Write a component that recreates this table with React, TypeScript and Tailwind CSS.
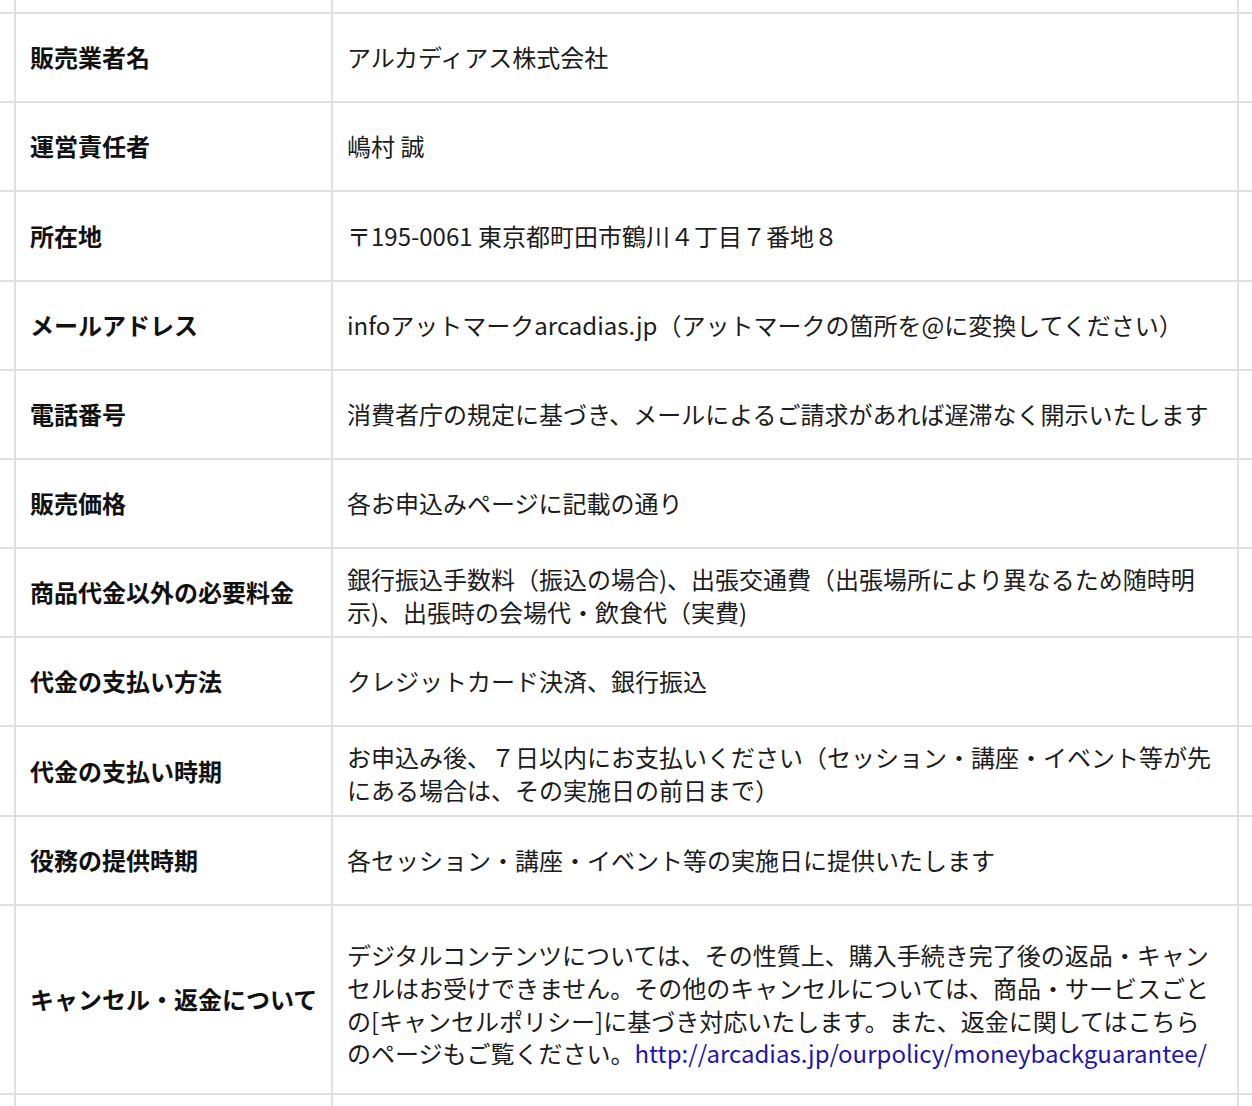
import React from "react";

interface Row {
  label: string;
  value: React.ReactNode;
  h: string;
  pad?: string;
}

const rows: Row[] = [
  { label: "販売業者名", value: "アルカディアス株式会社", h: "h-[87px]" },
  { label: "運営責任者", value: "嶋村 誠", h: "h-[87px]" },
  {
    label: "所在地",
    value: "〒195-0061 東京都町田市鶴川４丁目７番地８",
    h: "h-[88px]",
  },
  {
    label: "メールアドレス",
    value: "infoアットマークarcadias.jp（アットマークの箇所を@に変換してください）",
    h: "h-[87px]",
  },
  {
    label: "電話番号",
    value: "消費者庁の規定に基づき、メールによるご請求があれば遅滞なく開示いたします",
    h: "h-[87px]",
  },
  { label: "販売価格", value: "各お申込みページに記載の通り", h: "h-[87px]" },
  {
    label: "商品代金以外の必要料金",
    value:
      "銀行振込手数料（振込の場合)、出張交通費（出張場所により異なるため随時明示)、出張時の会場代・飲食代（実費)",
    h: "h-[87px]",
    pad: "pt-[6px]",
  },
  {
    label: "代金の支払い方法",
    value: "クレジットカード決済、銀行振込",
    h: "h-[87px]",
  },
  {
    label: "代金の支払い時期",
    value:
      "お申込み後、７日以内にお支払いください（セッション・講座・イベント等が先にある場合は、その実施日の前日まで）",
    h: "h-[88px]",
    pad: "pt-[6px]",
  },
  {
    label: "役務の提供時期",
    value: "各セッション・講座・イベント等の実施日に提供いたします",
    h: "h-[87px]",
  },
  {
    label: "キャンセル・返金について",
    value: (
      <>
        デジタルコンテンツについては、その性質上、購入手続き完了後の返品・キャンセルはお受けできません。その他のキャンセルについては、商品・サービスごとの[キャンセルポリシー]に基づき対応いたします。また、返金に関してはこちらのページもご覧ください。
        <a href="#" className="text-[#1f14b0]">
          http://arcadias.jp/ourpolicy/moneybackguarantee/
        </a>
      </>
    ),
    h: "h-[187px]",
    pad: "pt-[10px]",
  },
];

const line = "border-[#e0e0e0]";

export default function App() {
  return (
    <div
      className="w-[1252px] h-[1106px] overflow-hidden bg-white"
      style={{ fontFamily: '"Noto Sans CJK JP", "Noto Sans", sans-serif' }}
    >
      {/* cut-off row above */}
      <div className="flex h-[12px]">
        <div className="w-[14px]" />
        <div className={`w-[317px] border-l-2 ${line}`} />
        <div className={`w-[906px] border-l-2 ${line}`} />
        <div className={`flex-1 border-l-2 ${line}`} />
      </div>

      {rows.map((r) => (
        <div key={r.label} className={`flex border-t-2 ${line}`}>
          <div className="w-[14px] shrink-0" />
          <div
            className={`w-[317px] shrink-0 border-l-2 ${line} ${r.h} flex items-center pl-[14px] pr-[2px] whitespace-nowrap text-[24px] leading-[32.6px] font-bold text-[#111]`}
          >
            {r.label}
          </div>
          <div
            className={`w-[906px] shrink-0 border-l-2 ${line} ${r.h} ${r.pad ?? ""} flex items-center pl-[14px] pr-[14px] text-[24px] leading-[32.6px] text-[#1c1c1c]`}
          >
            <div>{r.value}</div>
          </div>
          <div className={`flex-1 border-l-2 ${line}`} />
        </div>
      ))}

      {/* next row, cut off */}
      <div className={`flex h-[60px] border-t-2 ${line}`}>
        <div className="w-[14px]" />
        <div className={`w-[317px] border-l-2 ${line}`} />
        <div className={`w-[906px] border-l-2 ${line}`} />
        <div className={`flex-1 border-l-2 ${line}`} />
      </div>
    </div>
  );
}
